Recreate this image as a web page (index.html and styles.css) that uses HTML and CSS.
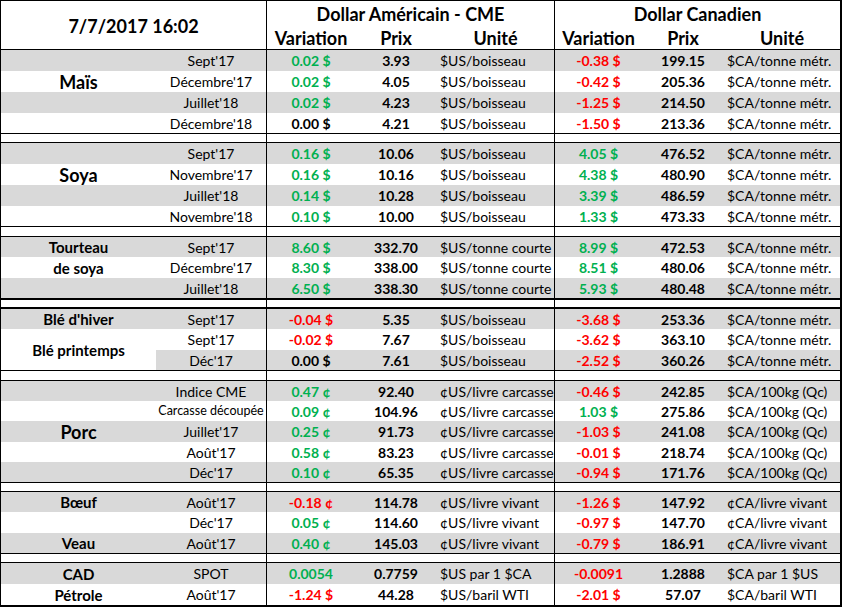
FILE: index.html
```html
<!DOCTYPE html>
<html lang="fr">
<head>
<meta charset="utf-8">
<title>Marchés 7/7/2017</title>
<link rel="stylesheet" href="styles.css">
</head>
<body>
<div class="sheet">
  <div class="grid hdr">
    <div class="stamp">7/7/2017 16:02</div>
    <div class="title sep us">Dollar Américain - CME</div>
    <div class="title sep ca">Dollar Canadien</div>
    <div class="colhead sep">Variation</div>
    <div class="colhead">Prix</div>
    <div class="colhead">Unité</div>
    <div class="colhead sep">Variation</div>
    <div class="colhead">Prix</div>
    <div class="colhead">Unité</div>
  </div>

  <div class="grid r4">
    <div class="row alt">
      <div class="c"></div><div class="c">Sept'17</div>
      <div class="c sep num up">0.02 $</div><div class="c num">3.93</div><div class="c unit">$US/boisseau</div>
      <div class="c sep num down">-0.38 $</div><div class="c num">199.15</div><div class="c unit">$CA/tonne métr.</div>
    </div>
    <div class="row">
      <div class="c lbl big">Maïs</div><div class="c">Décembre'17</div>
      <div class="c sep num up">0.02 $</div><div class="c num">4.05</div><div class="c unit">$US/boisseau</div>
      <div class="c sep num down">-0.42 $</div><div class="c num">205.36</div><div class="c unit">$CA/tonne métr.</div>
    </div>
    <div class="row alt">
      <div class="c"></div><div class="c">Juillet'18</div>
      <div class="c sep num up">0.02 $</div><div class="c num">4.23</div><div class="c unit">$US/boisseau</div>
      <div class="c sep num down">-1.25 $</div><div class="c num">214.50</div><div class="c unit">$CA/tonne métr.</div>
    </div>
    <div class="row">
      <div class="c"></div><div class="c">Décembre'18</div>
      <div class="c sep num">0.00 $</div><div class="c num">4.21</div><div class="c unit">$US/boisseau</div>
      <div class="c sep num down">-1.50 $</div><div class="c num">213.36</div><div class="c unit">$CA/tonne métr.</div>
    </div>
  </div>

  <div class="spacer s8"><div></div><div></div><div></div></div>

  <div class="grid r4">
    <div class="row alt">
      <div class="c"></div><div class="c">Sept'17</div>
      <div class="c sep num up">0.16 $</div><div class="c num">10.06</div><div class="c unit">$US/boisseau</div>
      <div class="c sep num up">4.05 $</div><div class="c num">476.52</div><div class="c unit">$CA/tonne métr.</div>
    </div>
    <div class="row">
      <div class="c lbl big">Soya</div><div class="c">Novembre'17</div>
      <div class="c sep num up">0.16 $</div><div class="c num">10.16</div><div class="c unit">$US/boisseau</div>
      <div class="c sep num up">4.38 $</div><div class="c num">480.90</div><div class="c unit">$CA/tonne métr.</div>
    </div>
    <div class="row alt">
      <div class="c"></div><div class="c">Juillet'18</div>
      <div class="c sep num up">0.14 $</div><div class="c num">10.28</div><div class="c unit">$US/boisseau</div>
      <div class="c sep num up">3.39 $</div><div class="c num">486.59</div><div class="c unit">$CA/tonne métr.</div>
    </div>
    <div class="row">
      <div class="c"></div><div class="c">Novembre'18</div>
      <div class="c sep num up">0.10 $</div><div class="c num">10.00</div><div class="c unit">$US/boisseau</div>
      <div class="c sep num up">1.33 $</div><div class="c num">473.33</div><div class="c unit">$CA/tonne métr.</div>
    </div>
  </div>

  <div class="spacer s9"><div></div><div></div><div></div></div>

  <div class="grid r3">
    <div class="row alt">
      <div class="c lbl">Tourteau</div><div class="c">Sept'17</div>
      <div class="c sep num up">8.60 $</div><div class="c num">332.70</div><div class="c unit">$US/tonne courte</div>
      <div class="c sep num up">8.99 $</div><div class="c num">472.53</div><div class="c unit">$CA/tonne métr.</div>
    </div>
    <div class="row">
      <div class="c lbl">de soya</div><div class="c">Décembre'17</div>
      <div class="c sep num up">8.30 $</div><div class="c num">338.00</div><div class="c unit">$US/tonne courte</div>
      <div class="c sep num up">8.51 $</div><div class="c num">480.06</div><div class="c unit">$CA/tonne métr.</div>
    </div>
    <div class="row alt">
      <div class="c"></div><div class="c">Juillet'18</div>
      <div class="c sep num up">6.50 $</div><div class="c num">338.30</div><div class="c unit">$US/tonne courte</div>
      <div class="c sep num up">5.93 $</div><div class="c num">480.48</div><div class="c unit">$CA/tonne métr.</div>
    </div>
  </div>

  <div class="spacer s7 thick"><div></div><div></div><div></div></div>

  <div class="grid r3">
    <div class="row alt">
      <div class="c lbl">Blé d'hiver</div><div class="c">Sept'17</div>
      <div class="c sep num down">-0.04 $</div><div class="c num">5.35</div><div class="c unit">$US/boisseau</div>
      <div class="c sep num down">-3.68 $</div><div class="c num">253.36</div><div class="c unit">$CA/tonne métr.</div>
    </div>
    <div class="row">
      <div class="c lbl merged">Blé printemps</div><div class="c">Sept'17</div>
      <div class="c sep num down">-0.02 $</div><div class="c num">7.67</div><div class="c unit">$US/boisseau</div>
      <div class="c sep num down">-3.62 $</div><div class="c num">363.10</div><div class="c unit">$CA/tonne métr.</div>
    </div>
    <div class="row alt">
      <div class="c">Déc'17</div>
      <div class="c sep num">0.00 $</div><div class="c num">7.61</div><div class="c unit">$US/boisseau</div>
      <div class="c sep num down">-2.52 $</div><div class="c num">360.26</div><div class="c unit">$CA/tonne métr.</div>
    </div>
  </div>

  <div class="spacer s9"><div></div><div></div><div></div></div>

  <div class="grid r5">
    <div class="row alt">
      <div class="c"></div><div class="c">Indice CME</div>
      <div class="c sep num up">0.47 ¢</div><div class="c num">92.40</div><div class="c unit">¢US/livre carcasse</div>
      <div class="c sep num down">-0.46 $</div><div class="c num">242.85</div><div class="c unit">$CA/100kg (Qc)</div>
    </div>
    <div class="row">
      <div class="c"></div><div class="c small">Carcasse découpée</div>
      <div class="c sep num up">0.09 ¢</div><div class="c num">104.96</div><div class="c unit">¢US/livre carcasse</div>
      <div class="c sep num up">1.03 $</div><div class="c num">275.86</div><div class="c unit">$CA/100kg (Qc)</div>
    </div>
    <div class="row alt">
      <div class="c lbl big">Porc</div><div class="c">Juillet'17</div>
      <div class="c sep num up">0.25 ¢</div><div class="c num">91.73</div><div class="c unit">¢US/livre carcasse</div>
      <div class="c sep num down">-1.03 $</div><div class="c num">241.08</div><div class="c unit">$CA/100kg (Qc)</div>
    </div>
    <div class="row">
      <div class="c"></div><div class="c">Août'17</div>
      <div class="c sep num up">0.58 ¢</div><div class="c num">83.23</div><div class="c unit">¢US/livre carcasse</div>
      <div class="c sep num down">-0.01 $</div><div class="c num">218.74</div><div class="c unit">$CA/100kg (Qc)</div>
    </div>
    <div class="row alt">
      <div class="c"></div><div class="c">Déc'17</div>
      <div class="c sep num up">0.10 ¢</div><div class="c num">65.35</div><div class="c unit">¢US/livre carcasse</div>
      <div class="c sep num down">-0.94 $</div><div class="c num">171.76</div><div class="c unit">$CA/100kg (Qc)</div>
    </div>
  </div>

  <div class="spacer s8"><div></div><div></div><div></div></div>

  <div class="grid r3">
    <div class="row alt">
      <div class="c lbl">Bœuf</div><div class="c">Août'17</div>
      <div class="c sep num down">-0.18 ¢</div><div class="c num">114.78</div><div class="c unit">¢US/livre vivant</div>
      <div class="c sep num down">-1.26 $</div><div class="c num">147.92</div><div class="c unit">¢CA/livre vivant</div>
    </div>
    <div class="row">
      <div class="c"></div><div class="c">Déc'17</div>
      <div class="c sep num up">0.05 ¢</div><div class="c num">114.60</div><div class="c unit">¢US/livre vivant</div>
      <div class="c sep num down">-0.97 $</div><div class="c num">147.70</div><div class="c unit">¢CA/livre vivant</div>
    </div>
    <div class="row alt">
      <div class="c lbl">Veau</div><div class="c">Août'17</div>
      <div class="c sep num up">0.40 ¢</div><div class="c num">145.03</div><div class="c unit">¢US/livre vivant</div>
      <div class="c sep num down">-0.79 $</div><div class="c num">186.91</div><div class="c unit">¢CA/livre vivant</div>
    </div>
  </div>

  <div class="spacer s8"><div></div><div></div><div></div></div>

  <div class="grid r2">
    <div class="row alt">
      <div class="c lbl">CAD</div><div class="c">SPOT</div>
      <div class="c sep num up">0.0054</div><div class="c num">0.7759</div><div class="c unit">$US par 1 $CA</div>
      <div class="c sep num down">-0.0091</div><div class="c num">1.2888</div><div class="c unit">$CA par 1 $US</div>
    </div>
    <div class="row">
      <div class="c lbl">Pétrole</div><div class="c">Août'17</div>
      <div class="c sep num down">-1.24 $</div><div class="c num">44.28</div><div class="c unit">$US/baril WTI</div>
      <div class="c sep num down">-2.01 $</div><div class="c num">57.07</div><div class="c unit">$CA/baril WTI</div>
    </div>
  </div>
</div>
</body>
</html>
```

FILE: styles.css
```css
* { box-sizing: border-box; }

body {
  margin: 0;
  background: #ffffff;
  color: #000000;
  font-family: Lato, "Liberation Sans", sans-serif;
  font-size: 14px;
}

.sheet {
  width: 842px;
  border-top: 1px solid #000;
  border-left: 1px solid #000;
  border-right: 2px solid #000;
  border-bottom: 2px solid #000;
}

.grid {
  display: grid;
  grid-template-columns: 155px 110px 89px 82px 117px 88px 82px 116px;
}

.r4 { grid-template-rows: 21px 21px 21px 20px; }
.r3 { grid-template-rows: 20px 21px 20px; }
.r5 { grid-template-rows: 20px 20px 21px 20px 20px; }
.r2 { grid-template-rows: 21px 21px; }

.hdr {
  grid-template-rows: 24px 24px;
  border-bottom: 1px solid #000;
  font-weight: 700;
  font-size: 18px;
}

.stamp {
  grid-column: 1 / 3;
  grid-row: 1 / 3;
  display: flex;
  align-items: center;
  justify-content: center;
  padding-top: 2px;
}

.title {
  display: flex;
  align-items: flex-end;
  justify-content: center;
  line-height: 22px;
}
.title.us { grid-column: 3 / 6; }
.title.ca { grid-column: 6 / 9; }

.colhead {
  display: flex;
  align-items: flex-end;
  justify-content: center;
  line-height: 22px;
}

.sep { border-left: 1px solid #000; }

.row { display: contents; }
.row.alt > .c { background: #d9d9d9; }
.row.alt > .c.merged { background: #ffffff; }

.c {
  display: flex;
  align-items: center;
  justify-content: center;
  white-space: nowrap;
  line-height: 1;
  padding-top: 1px;
}

.merged { grid-row: span 2; }

.num { font-weight: 700; }
.up { color: #00b050; }
.down { color: #ff0000; }

.unit {
  justify-content: flex-start;
  padding-left: 3px;
}

.small { font-size: 12.5px; }

.lbl { font-weight: 700; font-size: 15px; }
.lbl.big { font-size: 18px; }

.spacer {
  display: grid;
  grid-template-columns: 265px 288px 286px;
  border-top: 1px solid #000;
  border-bottom: 1px solid #000;
}
.spacer > div + div { border-left: 1px solid #000; }
.s8 { height: 10px; }
.s9 { height: 11px; }
.s7.thick {
  height: 11px;
  border-top-width: 2px;
  border-bottom-width: 2px;
}
```
